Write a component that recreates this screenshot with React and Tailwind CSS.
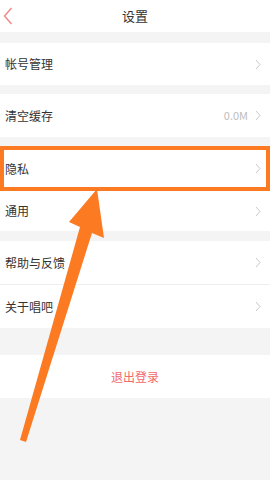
const font = { fontFamily: '"Noto Sans CJK SC", "Noto Sans", sans-serif' };

function Chevron() {
  return (
    <svg width="6" height="11" viewBox="0 0 6 11" className="shrink-0">
      <path d="M1 1l4 4.5L1 10" fill="none" stroke="#c8c8c8" strokeWidth="1" />
    </svg>
  );
}

function Row({ label, value, h = 'h-[42px]', boxed = false }) {
  return (
    <div className={`relative bg-white flex items-center justify-between pl-[5px] pr-[9px] ${h}`}>
      <span className="text-[12px] text-[#333]">{label}</span>
      <div className="flex items-center gap-[7px]">
        {value && <span className="text-[11px] text-[#bdbdbd]">{value}</span>}
        <Chevron />
      </div>
      {boxed && <div className="absolute inset-0 border-4 border-[#fb7a22] pointer-events-none" />}
    </div>
  );
}

export default function App() {
  return (
    <div className="relative w-[270px] h-[480px] bg-[#f4f4f4] overflow-hidden" style={font}>
      {/* header */}
      <div className="relative h-8 bg-white flex items-center justify-center">
        <svg width="10" height="18" viewBox="0 0 10 18" className="absolute left-[3px] top-[7px]">
          <path d="M8.5 1L1.5 9l7 8" fill="none" stroke="#f48585" strokeWidth="1.4" />
        </svg>
        <span className="text-[13px] text-[#333]">设置</span>
      </div>

      <div className="h-[11px]" />
      <Row label="帐号管理" />
      <div className="h-[9px]" />
      <Row label="清空缓存" value="0.0M" h="h-[43px]" />
      <div className="h-[9px]" />
      <Row label="隐私" h="h-[45px]" boxed />
      <Row label="通用" h="h-[40px]" />
      <div className="h-[10px]" />
      <Row label="帮助与反馈" h="h-[43px]" />
      <div className="h-px bg-[#eeeeee]" />
      <Row label="关于唱吧" h="h-[43px]" />
      <div className="h-[27px]" />
      <div className="h-[43px] bg-white flex items-center justify-center">
        <span className="text-[12px] text-[#f26a6a]">退出登录</span>
      </div>

      {/* annotation arrow */}
      <svg width="270" height="480" viewBox="0 0 270 480" className="absolute inset-0 pointer-events-none">
        <polygon
          points="97,189 104,238 92,233 26,442 20,440 80,227 69,222"
          fill="#fb7a22"
        />
      </svg>
    </div>
  );
}
